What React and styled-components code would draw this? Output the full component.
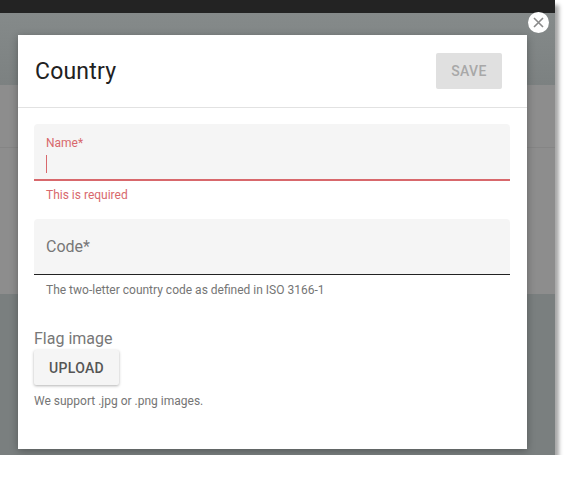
import React from 'react';
import styled, { createGlobalStyle } from 'styled-components';

const Global = createGlobalStyle`
    body {
        margin: 0;
        background: #fff;
        font-family: Roboto, "Liberation Sans", sans-serif;
    }
`;

const Frame = styled.div`
    position: relative;
    width: 555px;
    height: 455px;
    overflow: hidden;
    display: flex;
    flex-direction: column;
    box-shadow: 4px 5px 4px rgba(0, 0, 0, 0.35);
`;

const TopBar = styled.div`
    height: 13px;
    background: #232323;
    flex-shrink: 0;
`;

const AppBar = styled.div`
    height: 72px;
    background: linear-gradient(#858a8a, #7c8181);
    flex-shrink: 0;
`;

const Card = styled.div`
    background: #8d8d8d;
    flex-shrink: 0;
`;

const CardRow = styled.div`
    height: ${props => props.h}px;
    border-bottom: ${props => (props.line ? '1px solid #858585' : 'none')};
`;

const Rest = styled.div`
    flex: 1;
    background: #7a7f7f;
`;

const Modal = styled.div`
    position: absolute;
    left: 18px;
    top: 35px;
    width: 509px;
    height: 414px;
    background: #fff;
    box-shadow: 0 2px 8px rgba(0, 0, 0, 0.3);
    display: flex;
    flex-direction: column;
`;

const Close = styled.div`
    position: absolute;
    left: 528px;
    top: 12px;
    width: 21px;
    height: 21px;
    border-radius: 50%;
    background: #fff;
    display: flex;
    align-items: center;
    justify-content: center;
`;

const Header = styled.div`
    height: 72px;
    flex-shrink: 0;
    display: flex;
    align-items: center;
    justify-content: space-between;
    padding: 0 25px 0 17px;
    border-bottom: 1px solid #e2e2e2;
`;

const Title = styled.h1`
    margin: 0;
    font-size: 23px;
    font-weight: 400;
    color: #212121;
    letter-spacing: 0.2px;
`;

const SaveButton = styled.div`
    width: 66px;
    height: 36px;
    border-radius: 2px;
    background: #e0e0e0;
    color: #a8a8a8;
    font-size: 14px;
    font-weight: 500;
    display: flex;
    align-items: center;
    justify-content: center;
    letter-spacing: 0.3px;
`;

const Body = styled.div`
    padding: 16px 17px 0 16px;
    display: flex;
    flex-direction: column;
`;

const Field = styled.div`
    height: 55px;
    margin-top: ${props => props.top || 0}px;
    background: #f5f5f5;
    border-radius: 4px 4px 0 0;
    border-bottom: ${props => (props.error ? '2px solid #d8686c' : '1px solid #222')};
    padding: 0 12px;
    display: flex;
    flex-direction: column;
    justify-content: ${props => (props.error ? 'flex-start' : 'center')};
`;

const SmallLabel = styled.div`
    margin-top: 12px;
    font-size: 12px;
    color: #d8686c;
`;

const Caret = styled.div`
    margin-top: 5px;
    width: 1px;
    height: 18px;
    background: #d8686c;
`;

const BigLabel = styled.div`
    font-size: 16px;
    color: #777;
`;

const Helper = styled.div`
    font-size: 12px;
    color: ${props => (props.error ? '#d8686c' : '#757575')};
    padding-left: ${props => (props.inset ? 12 : 0)}px;
    margin-top: ${props => props.top}px;
    line-height: 14px;
`;

const SectionLabel = styled.div`
    font-size: 16px;
    color: #777;
    margin-top: 32px;
    line-height: 19px;
`;

const UploadButton = styled.div`
    margin-top: 2px;
    width: 85px;
    height: 35px;
    border-radius: 2px;
    background: #f5f5f5;
    box-shadow: 0 1px 3px rgba(0, 0, 0, 0.3);
    color: #555;
    font-size: 14px;
    font-weight: 500;
    display: flex;
    align-items: center;
    justify-content: center;
    letter-spacing: 0.3px;
`;

const App = () => (
    <>
        <Global />
        <Frame>
            <TopBar />
            <AppBar />
            <Card>
                <CardRow h={62} line />
                <CardRow h={146} />
            </Card>
            <Rest />
            <Modal>
                <Header>
                    <Title>Country</Title>
                    <SaveButton>SAVE</SaveButton>
                </Header>
                <Body>
                    <Field error>
                        <SmallLabel>Name*</SmallLabel>
                        <Caret />
                    </Field>
                    <Helper error inset top={7}>This is required</Helper>
                    <Field top={17}>
                        <BigLabel>Code*</BigLabel>
                    </Field>
                    <Helper inset top={8}>The two-letter country code as defined in ISO 3166-1</Helper>
                    <SectionLabel>Flag image</SectionLabel>
                    <UploadButton>UPLOAD</UploadButton>
                    <Helper top={9}>We support .jpg or .png images.</Helper>
                </Body>
            </Modal>
            <Close>
                <svg width="11" height="11" viewBox="0 0 11 11">
                    <path d="M1 1L10 10M10 1L1 10" stroke="#8a8a8a" strokeWidth="1.6" />
                </svg>
            </Close>
        </Frame>
    </>
);

export default App;
